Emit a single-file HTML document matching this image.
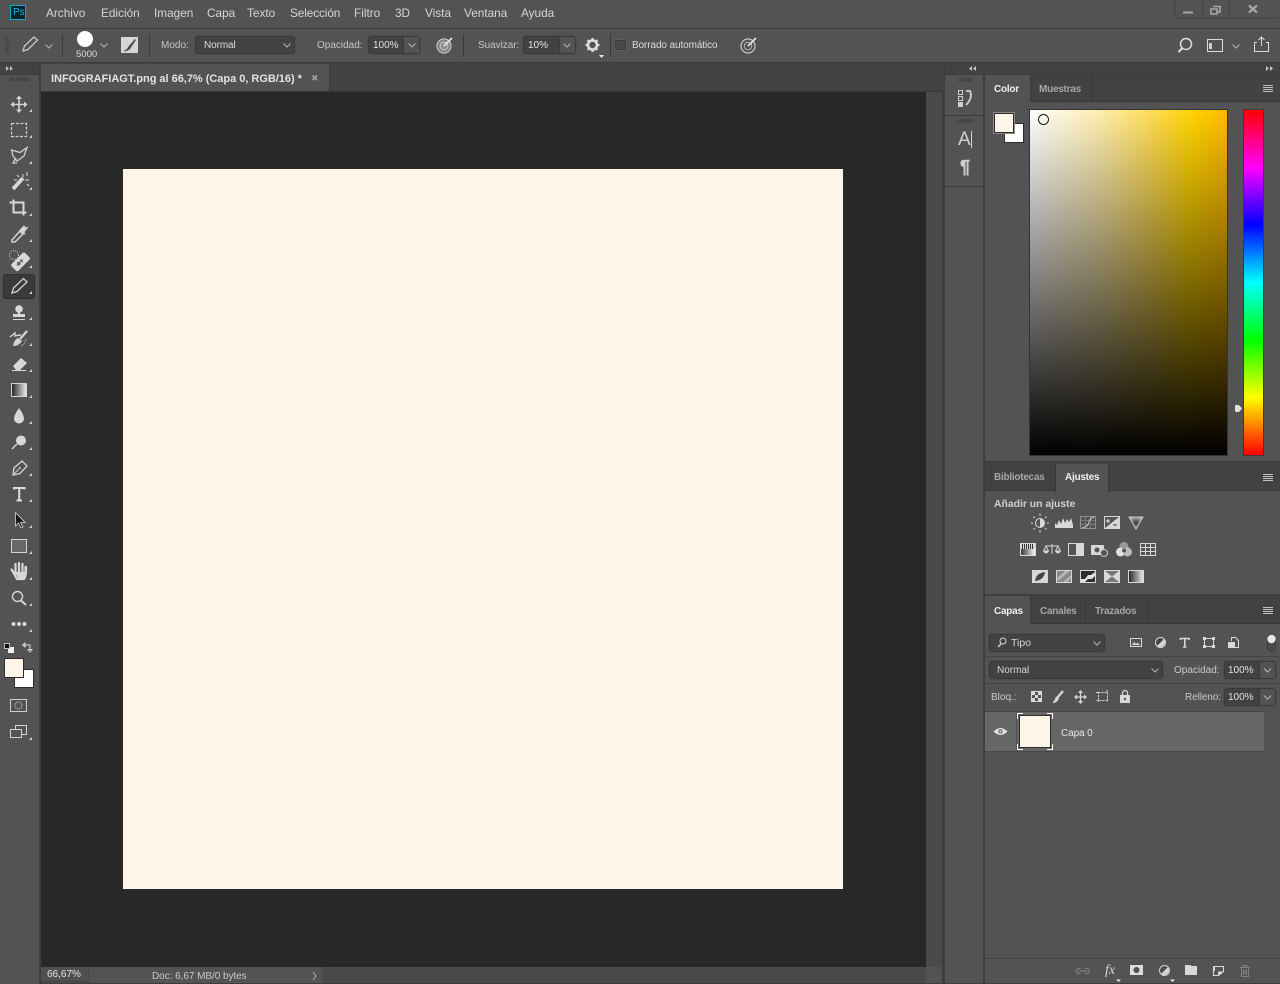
<!DOCTYPE html>
<html lang="es"><head><meta charset="utf-8"><title>Photoshop</title>
<style>
html,body{margin:0;padding:0;width:1280px;height:984px;overflow:hidden;background:#3b3b3b}
body{position:relative;font-family:"Liberation Sans",Arial,sans-serif;font-size:10px;color:#d4d4d4}
.b{position:absolute;box-sizing:border-box}
.t{position:absolute;white-space:nowrap;line-height:14px;height:14px}
.m{font-size:11.8px;color:#d6d6d6;top:6px}
.o{color:#c6c6c6;top:39px}
.inp{position:absolute;box-sizing:border-box;background:#424242;border:1px solid #3a3a3a;border-radius:3px;outline:1px solid #4d4d4d;outline-offset:0}
.tb{font-weight:bold;color:#a6a6a6;font-size:10px;letter-spacing:-.25px}
.tw{color:#eee}
svg{position:absolute;left:0;top:0}
</style></head><body>
<!-- chrome -->
<div class="b" style="left:0;top:0;width:1280px;height:28px;background:#535353"></div>
<div class="b" style="left:0;top:28px;width:1280px;height:1px;background:#3c3c3c"></div>
<div class="b" style="left:0;top:29px;width:1280px;height:33px;background:#535353"></div>
<div class="b" style="left:0;top:62px;width:1280px;height:1px;background:#383838"></div>
<div class="b" style="left:0;top:63px;width:1280px;height:921px;background:#3d3d3d"></div>
<!-- toolbar -->
<div class="b" style="left:0;top:63px;width:39px;height:11px;background:#424242"></div>
<div class="b" style="left:0;top:75px;width:39px;height:909px;background:#535353"></div>
<!-- tab row -->
<div class="b" style="left:41px;top:63px;width:903px;height:29px;background:#424242"></div>
<div class="b" style="left:41px;top:64px;width:289px;height:27px;background:#535353;border-right:1px solid #3c3c3c"></div>
<div class="b" style="left:41px;top:91px;width:903px;height:1px;background:#383838"></div>
<div class="t" style="left:51px;top:72px;font-size:11px;font-weight:bold;color:#e2e2e2;letter-spacing:-.02px">INFOGRAFIAGT.png al 66,7% (Capa 0, RGB/16) *</div>
<!-- canvas -->
<div class="b" style="left:41px;top:92px;width:885px;height:875px;background:#282828"></div>
<div class="b" style="left:123px;top:169px;width:720px;height:720px;background:#fdf5e8"></div>
<div class="b" style="left:926px;top:92px;width:16px;height:875px;background:#4a4a4a"></div>
<!-- status -->
<div class="b" style="left:41px;top:967px;width:885px;height:16px;background:#4a4a4a"></div>
<div class="b" style="left:926px;top:967px;width:16px;height:16px;background:#535353"></div>
<div class="b" style="left:41px;top:967px;width:47px;height:15px;background:#505050;border-bottom:1px solid #444"></div>
<div class="b" style="left:89px;top:967px;width:233px;height:16px;background:#535353"></div>
<div class="t" style="left:47px;top:968px;color:#e4e4e4;font-size:10px">66,67%</div>
<div class="t" style="left:152px;top:970px;color:#c8c8c8;letter-spacing:-.05px">Doc: 6,67 MB/0 bytes</div>
<!-- dock -->
<div class="b" style="left:945px;top:63px;width:335px;height:11px;background:#424242"></div>
<div class="b" style="left:945px;top:75px;width:38px;height:908px;background:#535353"></div>
<div class="b" style="left:945px;top:115px;width:38px;height:1px;background:#3a3a3a"></div>
<div class="b" style="left:945px;top:186px;width:38px;height:1px;background:#3a3a3a"></div>
<!-- color panel -->
<div class="b" style="left:985px;top:75px;width:295px;height:386px;background:#535353"></div>
<div class="b" style="left:985px;top:75px;width:295px;height:27px;background:#424242;border-bottom:1px solid #393939"></div>
<div class="b" style="left:985px;top:75px;width:45px;height:28px;background:#535353"></div>
<div class="b" style="left:1030px;top:75px;width:1px;height:27px;background:#393939"></div>
<div class="b" style="left:1092px;top:75px;width:1px;height:27px;background:#393939"></div>
<div class="t tb tw" style="left:994px;top:83px">Color</div>
<div class="t tb" style="left:1039px;top:83px">Muestras</div>
<div class="b" style="left:1004px;top:123px;width:20px;height:20px;background:#fff;border:1px solid #2c2c2c"></div>
<div class="b" style="left:994px;top:113px;width:20px;height:20px;background:#fdf5e8;border:1px solid #2c2c2c;outline:1px solid #8a8a8a"></div>
<div class="b" style="left:1029px;top:109px;width:199px;height:347px;border:1px solid #333;background:linear-gradient(to bottom,rgba(0,0,0,0),#000),linear-gradient(to right,#fff 0%,#ffeeb0 35%,#ffdc55 62%,#ffd400 82%,#ffbb00 100%)"></div>
<div class="b" style="left:1243px;top:109px;width:21px;height:347px;border:1px solid #3a3a3a;background:linear-gradient(to bottom,#f00 0%,#f0f 16.67%,#00f 33.33%,#0ff 50%,#0f0 66.67%,#ff0 83.33%,#f00 100%)"></div>
<div class="b" style="left:1038px;top:114px;width:11px;height:11px;border-radius:50%;border:1px solid #1a1a1a;box-shadow:inset 0 0 0 1px rgba(255,255,255,.6)"></div>
<!-- adjustments -->
<div class="b" style="left:985px;top:463px;width:295px;height:131px;background:#535353"></div>
<div class="b" style="left:985px;top:463px;width:295px;height:28px;background:#424242;border-bottom:1px solid #393939"></div>
<div class="b" style="left:1055px;top:464px;width:54px;height:28px;background:#535353;border-left:1px solid #393939;border-right:1px solid #393939"></div>
<div class="t tb" style="left:994px;top:471px">Bibliotecas</div>
<div class="t tb tw" style="left:1065px;top:471px">Ajustes</div>
<div class="t" style="left:994px;top:498px;font-weight:bold;color:#cfcfcf;font-size:10.4px">Añadir un ajuste</div>
<!-- layers -->
<div class="b" style="left:985px;top:596px;width:295px;height:387px;background:#535353"></div>
<div class="b" style="left:985px;top:596px;width:295px;height:28px;background:#424242;border-bottom:1px solid #393939"></div>
<div class="b" style="left:985px;top:596px;width:46px;height:29px;background:#535353;border-right:1px solid #393939"></div>
<div class="b" style="left:1085px;top:597px;width:1px;height:27px;background:#393939"></div>
<div class="b" style="left:1147px;top:597px;width:1px;height:27px;background:#393939"></div>
<div class="t tb tw" style="left:994px;top:605px">Capas</div>
<div class="t tb" style="left:1040px;top:605px">Canales</div>
<div class="t tb" style="left:1095px;top:605px">Trazados</div>
<div class="inp" style="left:989px;top:634px;width:116px;height:18px"></div>
<div class="t" style="left:1011px;top:636px;font-size:10.5px;color:#d6d6d6">Tipo</div>
<div class="b" style="left:985px;top:656px;width:295px;height:1px;background:#444"></div>
<div class="inp" style="left:989px;top:661px;width:174px;height:18px"></div>
<div class="t" style="left:997px;top:664px;color:#d6d6d6;font-size:10px">Normal</div>
<div class="t" style="left:1174px;top:664px;color:#c8c8c8;font-size:10px">Opacidad:</div>
<div class="inp" style="left:1224px;top:661px;width:52px;height:18px"></div>
<div class="b" style="left:1259px;top:661px;width:1px;height:18px;background:#3a3a3a"></div>
<div class="b" style="left:1260px;top:662px;width:15px;height:16px;background:#535353"></div>
<div class="t" style="left:1228px;top:664px;color:#e2e2e2">100%</div>
<div class="b" style="left:985px;top:683px;width:295px;height:1px;background:#444"></div>
<div class="t" style="left:991px;top:691px;color:#c8c8c8">Bloq.:</div>
<div class="t" style="left:1185px;top:691px;color:#c8c8c8;letter-spacing:-.1px">Relleno:</div>
<div class="inp" style="left:1224px;top:688px;width:52px;height:18px"></div>
<div class="b" style="left:1259px;top:688px;width:1px;height:18px;background:#3a3a3a"></div>
<div class="b" style="left:1260px;top:689px;width:15px;height:16px;background:#535353"></div>
<div class="t" style="left:1228px;top:691px;color:#e2e2e2">100%</div>
<div class="b" style="left:985px;top:711px;width:279px;height:1px;background:#444"></div>
<div class="b" style="left:985px;top:712px;width:279px;height:39px;background:#666"></div>
<div class="b" style="left:985px;top:751px;width:279px;height:1px;background:#484848"></div>
<div class="b" style="left:1016px;top:712px;width:1px;height:39px;background:#505050"></div>
<div class="b" style="left:1019px;top:715px;width:32px;height:33px;background:#fdf5e8;border:1px solid #2e2e2e"></div>
<div class="t" style="left:1061px;top:727px;color:#e6e6e6;letter-spacing:-.1px">Capa 0</div>
<div class="b" style="left:985px;top:958px;width:295px;height:1px;background:#444"></div>
<!-- menu -->
<div class="t m" style="left:46px">Archivo</div>
<div class="t m" style="left:101px">Edición</div>
<div class="t m" style="left:154px">Imagen</div>
<div class="t m" style="left:207px">Capa</div>
<div class="t m" style="left:247px">Texto</div>
<div class="t m" style="left:290px;letter-spacing:-.1px">Selección</div>
<div class="t m" style="left:354px">Filtro</div>
<div class="t m" style="left:395px">3D</div>
<div class="t m" style="left:425px">Vista</div>
<div class="t m" style="left:464px">Ventana</div>
<div class="t m" style="left:521px">Ayuda</div>
<div class="b" style="left:10px;top:5px;width:16px;height:15px;background:#04222c;border:1px solid #12a8d4"></div>
<div class="t" style="left:13px;top:6px;font-size:10px;color:#1cb8e4">Ps</div>
<!-- options -->
<div class="t" style="left:76px;top:48px;color:#dcdcdc;font-size:9.5px">5000</div>
<div class="t o" style="left:161px">Modo:</div>
<div class="inp" style="left:195px;top:36px;width:100px;height:18px"></div>
<div class="t" style="left:204px;top:39px;color:#dcdcdc;letter-spacing:-.1px">Normal</div>
<div class="t o" style="left:317px">Opacidad:</div>
<div class="inp" style="left:368px;top:36px;width:52px;height:18px"></div>
<div class="b" style="left:403px;top:37px;width:16px;height:16px;background:#535353;border-left:1px solid #3a3a3a"></div>
<div class="t" style="left:373px;top:39px;color:#e2e2e2">100%</div>
<div class="t o" style="left:478px;letter-spacing:-.05px">Suavizar:</div>
<div class="inp" style="left:523px;top:36px;width:53px;height:18px"></div>
<div class="b" style="left:559px;top:37px;width:16px;height:16px;background:#535353;border-left:1px solid #3a3a3a"></div>
<div class="t" style="left:528px;top:39px;color:#e2e2e2">10%</div>
<div class="b" style="left:615px;top:40px;width:11px;height:10px;border:1px solid #3a3a3a;border-radius:2px;background:#4a4a4a;outline:1px solid #5e5e5e"></div>
<div class="t" style="left:632px;top:39px;color:#dcdcdc;letter-spacing:-.1px">Borrado automático</div>

<svg width="1280" height="984" viewBox="0 0 1280 984" fill="none">
<defs>
<g id="chev"><path d="M-3.500 -1.500L0 2L3.500 -1.500" stroke="#b4b4b4" fill="none"/></g>
<g id="tri"><path d="M3 0V3H0Z" fill="#cfcfcf"/></g>
<g id="menu"><path d="M0 .5H10M0 2.500H10M0 4.500H10M0 6.500H10" stroke="#c0c0c0"/></g>
<g id="target"><circle cx="-1" cy="1" r="7" stroke="#c8c8c8" stroke-width="1.200"/><circle cx="-1" cy="1" r="3.800" stroke="#c8c8c8" stroke-width=".8"/><path d="M-1 1L7 -7" stroke="#e2e2e2" stroke-width="1.800"/></g>
</defs>
<!-- window buttons -->
<path d="M1175 0V15Q1175 18 1178 18H1277Q1280 18 1280 15" stroke="#444"/>
<path d="M1202.500 0V18M1229.500 0V18" stroke="#444"/>
<path d="M1183 12.500H1193" stroke="#a8a8a8" stroke-width="2"/>
<path d="M1213 6.500H1220V12H1217M1211 9H1217V14H1211Z" stroke="#a8a8a8" stroke-width="1.600"/>
<path d="M1249 5.500L1257 12.500M1257 5.500L1249 12.500" stroke="#a8a8a8" stroke-width="2.200"/>
<!-- tab close -->
<path d="M312.500 75.500L317 80M317 75.500L312.500 80" stroke="#a4a4a4" stroke-width="1.600"/>
<!-- grips and collapsers -->
<path d="M5 36.500H9M5 38.500H9M5 40.500H9M5 42.500H9M5 44.500H9M5 46.500H9M5 48.500H9M5 50.500H9M5 52.500H9" stroke="#444"/>
<path d="M10 79H29" stroke="#3c3c3c" stroke-width="4" stroke-dasharray="1 1"/>
<path d="M958 80H973" stroke="#3c3c3c" stroke-width="4" stroke-dasharray="1 1"/>
<path d="M958 121H973" stroke="#3c3c3c" stroke-width="4" stroke-dasharray="1 1"/>
<path d="M6 66L9 68.500L6 71ZM10 66L13 68.500L10 71Z" fill="#c4c4c4"/>
<path d="M1266 66L1269 68.500L1266 71ZM1270 66L1273 68.500L1270 71Z" fill="#c4c4c4"/>
<path d="M972 66L969 68.500L972 71ZM976 66L973 68.500L976 71Z" fill="#c4c4c4"/>
<!-- separators option bar -->
<path d="M62.500 34V57M149.500 34V57M463.500 34V57M610.500 34V57" stroke="#3a3a3a"/>
<!-- options icons -->
<path d="M23 51L24.500 46L34 37L37.500 40L28 49.500Z" stroke="#c8c8c8" stroke-width="1.300"/>
<use href="#chev" x="49" y="46"/>
<circle cx="85" cy="39" r="8" fill="#fff"/>
<use href="#chev" x="104" y="45"/>
<rect x="121" y="37" width="17" height="16" fill="#d6d6d6"/>
<path d="M123 51Q127 50 128 47L135 39L136 40L130 49Q127 52 123 51Z" fill="#4a4a4a"/>
<use href="#chev" x="287" y="45"/>
<use href="#chev" x="412" y="45"/>
<circle cx="444" cy="46" r="6" fill="#8e8e8e"/>
<use href="#target" x="445" y="45"/>
<use href="#chev" x="567" y="45"/>
<g transform="translate(592.500,45)"><circle r="4.500" stroke="#dcdcdc" stroke-width="2.600"/><path d="M0-7V7M-7 0H7M-5 -5L5 5M5 -5L-5 5" stroke="#dcdcdc" stroke-width="2.200" stroke-dasharray="2.500 9"/></g>
<path d="M599 55H604L601.500 58Z" fill="#e8e8e8"/>
<use href="#target" x="749" y="45"/>
<!-- right option icons -->
<circle cx="1186" cy="44" r="5.500" stroke="#dedede" stroke-width="1.500"/><path d="M1182 48.500L1178.500 52" stroke="#dedede" stroke-width="2"/>
<rect x="1207.500" y="39.500" width="15" height="12" stroke="#dedede"/><rect x="1209" y="43" width="3" height="6" fill="#cfcfcf"/>
<use href="#chev" x="1236" y="46"/>
<path d="M1257 42.500H1254.500V51.500H1268.500V42.500H1266M1261.500 46V37M1258.500 40L1261.500 37L1264.500 40" stroke="#dedede"/>
<!-- toolbar -->
<rect x="3.500" y="274.500" width="31" height="24" rx="2" fill="#3a3a3a" stroke="#2f2f2f"/>
<g fill="#cfcfcf" stroke="none">
<use href="#tri" x="29" y="109"/><use href="#tri" x="29" y="135"/><use href="#tri" x="29" y="161"/><use href="#tri" x="29" y="187"/><use href="#tri" x="29" y="213"/><use href="#tri" x="29" y="239"/><use href="#tri" x="29" y="265"/><use href="#tri" x="29" y="291"/><use href="#tri" x="29" y="317"/><use href="#tri" x="29" y="343"/><use href="#tri" x="29" y="369"/><use href="#tri" x="29" y="395"/><use href="#tri" x="29" y="421"/><use href="#tri" x="29" y="447"/><use href="#tri" x="29" y="473"/><use href="#tri" x="29" y="499"/><use href="#tri" x="29" y="525"/><use href="#tri" x="29" y="551"/><use href="#tri" x="29" y="577"/><use href="#tri" x="29" y="603"/><use href="#tri" x="29" y="629"/><use href="#tri" x="29" y="737"/>
</g>
<!-- move -->
<path d="M19 97V112M11.500 104.500H26.500" stroke="#d4d4d4" stroke-width="1.600"/><path d="M19 95.500L16 99H22ZM19 113L16 109.500H22ZM10.500 104.500L14 101.500V107.500ZM27.500 104.500L24 101.500V107.500Z" fill="#d4d4d4"/>
<!-- marquee -->
<rect x="11.500" y="123.500" width="15" height="13" stroke="#cfcfcf" stroke-width="1.200" stroke-dasharray="3 1.500"/>
<!-- lasso -->
<path d="M11.500 150L20 152.500L27 147.500L24 156L17 161L13 156Z M16 158L13 163H17" stroke="#cfcfcf" stroke-width="1.300"/>
<!-- wand -->
<path d="M13 189L23 178" stroke="#d8d8d8" stroke-width="3.800"/><path d="M23 174V177M27 172V176M29 180H25M29 186L27 184M17 175L19 177M14 180H17" stroke="#d8d8d8"/>
<!-- crop -->
<path d="M13.500 199.500V212.500H26.500M9.500 202.500H23.500V215.500" stroke="#d8d8d8" stroke-width="2"/>
<!-- eyedropper -->
<path d="M12 240L20 231L23 234L15 242H12Z" stroke="#d4d4d4" stroke-width="1.500"/><path d="M20 230L24 226L26 228L28 227L24 232L25 234L21 233Z" fill="#d4d4d4" stroke="#d4d4d4" stroke-width=".8"/>
<!-- heal -->
<g transform="rotate(-45 20 262)"><rect x="11" y="257.500" width="19" height="9.500" rx="2" fill="#d8d8d8"/><path d="M18 260L21 262.250L18 264.500L15 262.250Z" fill="#666"/><path d="M21 260L24 262.250L21 264.500" fill="#666"/></g>
<circle cx="14" cy="255" r="4.500" stroke="#d8d8d8" stroke-dasharray="1 1.500"/>
<!-- brush/pencil -->
<path d="M12 293L13.500 288L23.500 278.500L27 282L17 291.500Z" stroke="#d4d4d4" stroke-width="1.300"/>
<!-- stamp -->
<circle cx="19" cy="309" r="3.800" fill="#d8d8d8"/><path d="M18 311H20V314H25V317H13V314H18Z" fill="#d8d8d8"/><path d="M13 319.500H25" stroke="#d8d8d8"/>
<!-- history brush -->
<path d="M27 331L20 339" stroke="#d4d4d4" stroke-width="2.400"/><path d="M13 346Q14 340 18 338L22 341Q19 346 13 346Z" fill="#d4d4d4"/><path d="M10 337L15 333V336Q18 335 21 335" stroke="#d4d4d4" stroke-width="1.400"/><path d="M26 339Q25 344 21 346" stroke="#d4d4d4" stroke-dasharray="1 1"/>
<!-- eraser -->
<path d="M13 366L21 358L27 363L20 370H16Z" fill="#d8d8d8"/><path d="M12 370.500H26" stroke="#d8d8d8"/>
<!-- gradient -->
<defs><linearGradient id="gr"><stop offset="0" stop-color="#222"/><stop offset="1" stop-color="#eee"/></linearGradient><linearGradient id="gk"><stop offset="0" stop-color="#333"/><stop offset="1" stop-color="#fff"/></linearGradient></defs>
<rect x="11.500" y="383.500" width="15" height="13" fill="url(#gr)" stroke="#d4d4d4"/>
<!-- blur -->
<path d="M19 408Q24 415 24 418.500A5 5 0 0 1 14 418.500Q14 415 19 408Z" fill="#d8d8d8"/>
<!-- dodge -->
<circle cx="21" cy="440.500" r="5" fill="#d8d8d8"/><path d="M17 444L12 449" stroke="#d8d8d8" stroke-width="1.500"/>
<!-- pen -->
<path d="M13 475L14 468L22 461L27 466L20 473.500Z" stroke="#d4d4d4" stroke-width="1.300"/><path d="M14 474L19 469" stroke="#d4d4d4"/><circle cx="20" cy="468" r="1" fill="#d4d4d4"/>
<!-- type -->
<path d="M14 489.500V488H24.500V489.500M19.250 488V500M16.500 500.500H22" stroke="#dedede" stroke-width="2"/>
<!-- path select -->
<path d="M15.500 512.500V526L18.500 523L21 528L23 527L20.500 522.500H25Z" fill="#1a1a1a" stroke="#d8d8d8" stroke-width=".8"/>
<!-- rect -->
<rect x="11.500" y="539.500" width="15" height="13" fill="#686868" stroke="#d4d4d4"/>
<!-- hand -->
<path d="M13 572L17 579H24Q26 576 26 571V567M14 573L11.500 569.500M15.500 574V564M19 574V563M22.500 574V564M25.500 573V567" stroke="#d8d8d8" stroke-width="2.200" stroke-linecap="round"/><path d="M15 572H25V578H18Z" fill="#d8d8d8"/>
<!-- zoom -->
<circle cx="17.500" cy="596.500" r="5" stroke="#d4d4d4" stroke-width="1.400"/><path d="M21 600.500L26 605" stroke="#d4d4d4" stroke-width="2"/>
<!-- dots -->
<circle cx="13.500" cy="624" r="2" fill="#d8d8d8"/><circle cx="19" cy="624" r="2" fill="#d8d8d8"/><circle cx="24.500" cy="624" r="2" fill="#d8d8d8"/>
<!-- default colors/swap -->
<rect x="8" y="647" width="6" height="6" fill="#eee"/><rect x="4.500" y="643.500" width="5" height="5" fill="#111" stroke="#ddd" stroke-width=".8"/>
<path d="M24 645H30V650M22.500 645L25 643V647ZM30 652L28 649.500H32Z" stroke="#d8d8d8" fill="none" stroke-width="1"/>
<rect x="14.500" y="669.500" width="19" height="18" fill="#fff" stroke="#2c2c2c"/>
<rect x="4.500" y="658.500" width="19" height="19" fill="#fdf5e8" stroke="#2c2c2c"/>
<!-- quickmask -->
<rect x="10.500" y="699.500" width="16" height="12" stroke="#cfcfcf"/><circle cx="18.500" cy="705.500" r="3.500" stroke="#cfcfcf" stroke-dasharray="1 1"/>
<!-- screen mode -->
<path d="M15.500 729.500V725.500H26.500V734.500H22" stroke="#d4d4d4"/><rect x="10.500" y="729.500" width="11" height="8" stroke="#d4d4d4"/>
<!-- status chevron -->
<path d="M313 972L316 976L313 980" stroke="#aaa"/>
<!-- dock icons -->
<path d="M958.500 90.500H962.500V94.500H958.500ZM958.500 96.500H962.500V100.500H958.500Z" stroke="#d0d0d0"/><rect x="958" y="102" width="5" height="5" fill="#d0d0d0"/>
<path d="M966 91H971M970 91Q973 98 966 105" stroke="#d0d0d0" stroke-width="1.800"/>
<!-- panel menus -->
<use href="#menu" x="1263" y="85"/><use href="#menu" x="1263" y="474"/><use href="#menu" x="1263" y="607"/>
<!-- hue slider arrow -->
<path d="M1235 405.500Q1235 405 1236 405H1239L1242 408.500L1239 412H1236Q1235 412 1235 411Z" fill="#e0e0e0"/>
<!-- adjustment row 1 -->
<circle cx="1040" cy="523" r="4.500" fill="#555" stroke="#d8d8d8"/><path d="M1040 518.500A4.500 4.500 0 0 1 1040 527.500Z" fill="#d8d8d8"/><path d="M1040 516V513.500M1040 530V532.500M1033 523H1031M1049 523H1047M1035 518L1033.500 516.500M1045 528L1046.500 529.500M1045 518L1046.500 516.500M1035 528L1033.500 529.500" stroke="#d8d8d8"/>
<path d="M1055 528V523L1057 525L1059 520L1061 524L1063 518L1065 523L1067 519L1069 522L1071 518L1073 525V528Z" fill="#d8d8d8"/>
<rect x="1080.500" y="516.500" width="15" height="12" stroke="#909090"/><path d="M1085.500 517V528M1090.500 517V528M1081 520.500H1095M1081 524.500H1095" stroke="#777"/><path d="M1082 528Q1088 527 1089 522Q1090 518 1094 517" stroke="#c8c8c8"/>
<rect x="1104.500" y="516.500" width="15" height="12" fill="#555" stroke="#d8d8d8"/><path d="M1105 528L1119 517V528Z" fill="#d8d8d8"/><path d="M1106 521H1110M1108 519V523" stroke="#eee"/><path d="M1113 525H1117" stroke="#333"/>
<defs><radialGradient id="vib"><stop offset="0" stop-color="#333"/><stop offset="1" stop-color="#aaa"/></radialGradient></defs>
<path d="M1129 517H1143L1136 529Z" fill="url(#vib)" stroke="#c8c8c8"/>
<!-- row 2 -->
<rect x="1020.500" y="543.500" width="15" height="12" fill="url(#gk)" stroke="#d8d8d8"/><path d="M1021 544H1035V549H1021Z" fill="#d8d8d8"/><path d="M1022.500 544V549M1024.500 544V549M1026.500 544V549M1028.500 544V549M1030.500 544V549M1032.500 544V549" stroke="#333"/>
<path d="M1052 544V554M1046 546H1058M1043.500 551L1046 546L1048.500 551ZM1055.500 551L1058 546L1060.500 551Z" stroke="#d8d8d8"/><path d="M1043.500 551A2.500 2.500 0 0 0 1048.500 551ZM1055.500 551A2.500 2.500 0 0 0 1060.500 551Z" fill="#d8d8d8"/>
<rect x="1068.500" y="543.500" width="15" height="12" stroke="#d8d8d8"/><rect x="1076" y="544" width="8" height="11" fill="#d8d8d8"/>
<rect x="1091" y="545" width="13" height="10" rx="1" fill="#d8d8d8"/><circle cx="1097" cy="550" r="2.500" fill="#555"/><circle cx="1104" cy="553" r="3.500" fill="#555" stroke="#c8c8c8"/>
<circle cx="1124" cy="546.500" r="4.500" fill="#999"/><circle cx="1120.500" cy="552" r="4.500" fill="#e0e0e0"/><circle cx="1127.500" cy="552" r="4.500" fill="#bbb"/><circle cx="1124" cy="550.500" r="2" fill="#555"/>
<rect x="1140.500" y="543.500" width="15" height="12" stroke="#d8d8d8"/><path d="M1145.500 544V555M1150.500 544V555M1141 547.500H1155M1141 551.500H1155" stroke="#d8d8d8"/>
<!-- row 3 -->
<rect x="1032.500" y="570.500" width="15" height="12" fill="#d8d8d8" stroke="#d8d8d8"/><path d="M1035 581Q1036 573 1045 572Q1044 580 1035 581Z" fill="#444"/>
<rect x="1056.500" y="570.500" width="15" height="12" fill="#888" stroke="#d8d8d8"/><path d="M1057 578L1065 571H1070L1058 581ZM1063 582L1071 575V578L1067 582Z" fill="#b4b4b4"/>
<rect x="1080.500" y="570.500" width="15" height="12" fill="#2e2e2e" stroke="#d8d8d8"/><path d="M1081 579H1085L1088 575H1091L1095 572V576L1092 579H1088L1085 582H1081Z" fill="#e0e0e0"/>
<rect x="1104.500" y="570.500" width="15" height="12" fill="#777" stroke="#d8d8d8"/><path d="M1105 571L1112 576.500L1105 582ZM1119 571L1112 576.500L1119 582Z" fill="#d8d8d8"/>
<rect x="1128.500" y="570.500" width="15" height="12" fill="url(#gr)" stroke="#d8d8d8"/>
<!-- layers filter -->
<circle cx="1003" cy="641" r="3" stroke="#d8d8d8"/><path d="M1001 644L998 647" stroke="#d8d8d8" stroke-width="1.400"/>
<use href="#chev" x="1097" y="643"/>
<rect x="1130.500" y="638.500" width="11" height="8" fill="#555" stroke="#d8d8d8"/><path d="M1132 645L1134 642L1136 644L1137.500 642.500L1140 645Z" fill="#d8d8d8"/>
<circle cx="1160.500" cy="642.500" r="5" fill="#444" stroke="#d8d8d8"/><path d="M1164 639A5 5 0 0 1 1157 646Z" fill="#d8d8d8"/>
<path d="M1180.500 640V638.500H1189V640M1184.800 638.500V647M1183 647H1186.500" stroke="#d8d8d8" stroke-width="1.600"/>
<path d="M1205 638.500H1213M1205 646.500H1213M1204.500 639V646M1213.500 639V646" stroke="#d8d8d8"/><rect x="1203" y="637" width="3" height="3" fill="#d8d8d8"/><rect x="1212" y="637" width="3" height="3" fill="#d8d8d8"/><rect x="1203" y="645" width="3" height="3" fill="#d8d8d8"/><rect x="1212" y="645" width="3" height="3" fill="#d8d8d8"/>
<path d="M1231.500 641V637.500H1235.500L1238.500 640.500V647.500H1235" stroke="#d8d8d8"/><rect x="1228" y="642" width="7" height="6" fill="#d8d8d8"/>
<rect x="1267.500" y="634.500" width="8" height="17" rx="4" stroke="#3c3c3c" fill="#4a4a4a"/><circle cx="1271.500" cy="639" r="4.200" fill="#e8e8e8"/>
<use href="#chev" x="1155" y="670"/><use href="#chev" x="1267.500" y="670"/><use href="#chev" x="1267.500" y="697"/>
<!-- lock icons -->
<rect x="1031.500" y="691.500" width="10" height="10" stroke="#d8d8d8"/><path d="M1032 692H1035V695H1032ZM1038 692H1041V695H1038ZM1035 695H1038V698H1035ZM1032 698H1035V701H1032ZM1038 698H1041V701H1038Z" fill="#d8d8d8"/>
<path d="M1063 691L1057 698" stroke="#d8d8d8" stroke-width="2.400"/><path d="M1052.500 703Q1056 703.500 1059 699L1056 696.500Q1055 700 1052.500 703Z" fill="#d8d8d8"/>
<path d="M1080.500 692V702M1075 697H1086" stroke="#d8d8d8" stroke-width="1.200"/><path d="M1080.500 690L1078 693H1083ZM1080.500 704L1078 701H1083ZM1074 697L1077 694.500V699.500ZM1087 697L1084 694.500V699.500Z" fill="#d8d8d8"/>
<path d="M1096.500 700.500H1107.500M1098.500 692.500H1107.500V702M1098.500 692V702" stroke="#d8d8d8" stroke-dasharray="2 1"/><path d="M1096 692.500H1098M1107 690V692" stroke="#d8d8d8"/>
<rect x="1120" y="695" width="10" height="8" fill="#d8d8d8"/><path d="M1122.500 695V693A2.500 2.500 0 0 1 1127.500 693V695" stroke="#d8d8d8" stroke-width="1.300"/><circle cx="1125" cy="699" r="1.200" fill="#555"/>
<!-- eye -->
<path d="M993.500 731.500Q1000.500 724.500 1007.500 731.500Q1000.500 738.500 993.500 731.500Z" fill="#e0e0e0"/><circle cx="1000.500" cy="731.500" r="2.200" fill="#666"/><circle cx="1000.500" cy="731.500" r="1" fill="#e0e0e0"/>
<!-- thumb corners -->
<path d="M1017.500 719V713.500H1023M1047 713.500H1052.500V719M1017.500 744V749.500H1023M1047 749.500H1052.500V744" stroke="#fff"/>
<!-- bottom icons -->
<path d="M1081 968.500H1079A2.500 2.500 0 0 0 1079 973.500H1081M1085 968.500H1087A2.500 2.500 0 0 1 1087 973.500H1085M1079 971H1087" stroke="#808080" stroke-width="1.200" transform="translate(-.2,0)"/>
<rect x="1130" y="965" width="13" height="10" fill="#dcdcdc"/><circle cx="1136.500" cy="970" r="3" fill="#505050"/>
<circle cx="1164.500" cy="970.500" r="5" fill="#4c4c4c" stroke="#d4d4d4"/><path d="M1168 967A5 5 0 0 1 1161 974Z" fill="#d4d4d4"/>
<path d="M1170 979.500H1175L1172.500 982ZM1116 979.500H1121L1118.500 982Z" fill="#e8e8e8"/>
<path d="M1185 966H1197V975H1185Z" fill="#d8d8d8"/><path d="M1185 965.500H1191" stroke="#d8d8d8"/>
<path d="M1213.500 966.500H1223.500V971.500L1218.500 975.500H1213.500V966.500" stroke="#d8d8d8" stroke-width="1.100"/><path d="M1218 971.500H1223L1218 976Z" fill="#d8d8d8"/><path d="M1213 967H1215V971H1213Z" fill="#d8d8d8"/>
<path d="M1240 967.500H1250M1243 967V965.500H1247V967M1241.500 968V976.500H1248.500V968M1243.500 969.500V975M1245 969.500V975M1246.500 969.500V975" stroke="#808080"/>
<!-- text cursor next to A -->
<path d="M971.500 131V148" stroke="#d0d0d0"/>
</svg>
<div class="t" style="left:958px;top:130px;font-size:19px;line-height:19px;height:19px;color:#d0d0d0">A</div>
<div class="t" style="left:960px;top:158px;font-size:18px;line-height:18px;height:18px;color:#d0d0d0;font-weight:bold;-webkit-text-stroke:.5px #d0d0d0">¶</div>
<div class="t" style="left:1105px;top:964px;font-family:'Liberation Serif',serif;font-style:italic;font-size:14px;color:#d8d8d8">fx</div>
</body></html>
